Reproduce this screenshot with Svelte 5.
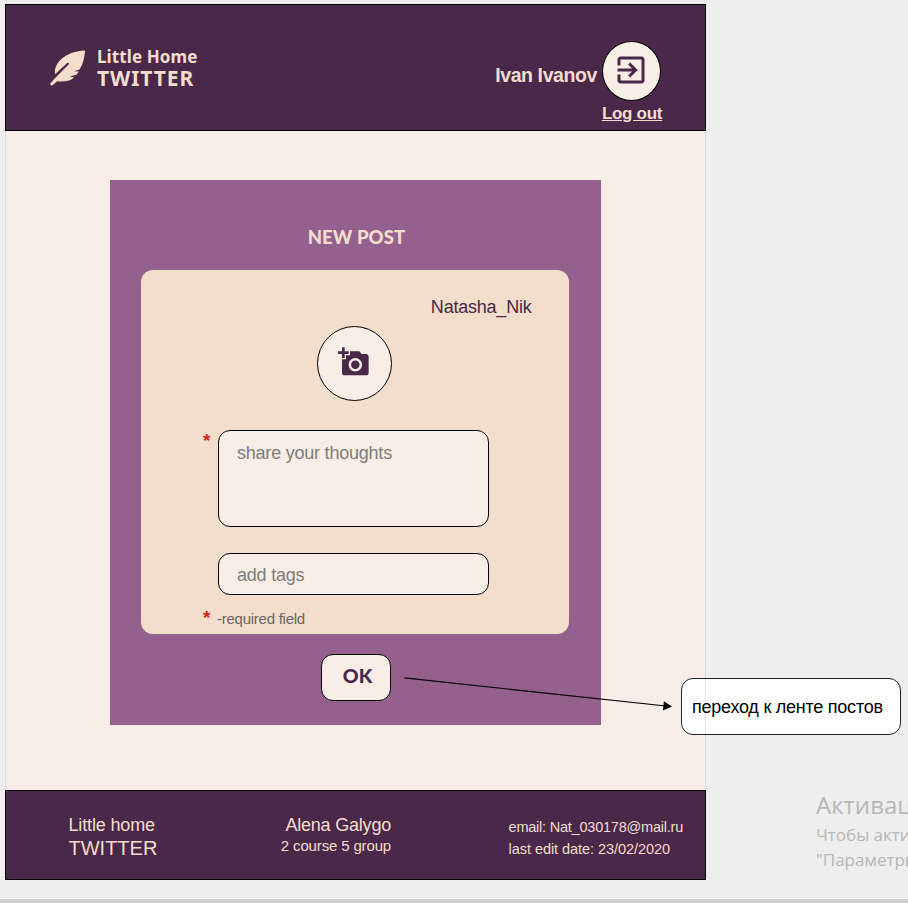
<script>
  let thoughts = $state('');
  let tags = $state('');
</script>

<div class="stage">
  <div class="page">
    <header>
      <div class="brand">
        <svg class="feather" width="36" height="36" viewBox="0 0 36 36" aria-hidden="true">
          <path d="M35 .5C34.800 5 33.500 14 29.500 19.600L24 21.200L28.800 21.400L26.800 24.600L20 26.600L24 27.400C20 31.300 13 31.800 7.200 31.200L2.600 35.200Q.4 36 .1 33.700L4.700 28.500L18.800 14.300Q19.300 12.500 17.200 12.900L5 24.200C3.500 12.500 16 1.200 35 .5Z" />
        </svg>
        <div class="name"><span class="little">Little Home</span><strong>TWITTER</strong></div>
      </div>
      <div class="account">
        <span class="user">Ivan Ivanov</span>
        <div class="exit">
          <button class="round" aria-label="Log out">
            <svg width="36" height="36" viewBox="0 0 24 24"><path d="M10.090 15.590L11.500 17l5-5-5-5-1.410 1.410L12.670 11H3v2h9.670l-2.580 2.590zM19 3H5c-1.110 0-2 .9-2 2v4h2V5h14v14H5v-4H3v4c0 1.100.89 2 2 2h14c1.100 0 2-.9 2-2V5c0-1.100-.9-2-2-2z" /></svg>
          </button>
          <a href="#logout">Log out</a>
        </div>
      </div>
    </header>

    <main>
      <section class="panel">
        <h1>NEW POST</h1>
        <div class="card">
          <div class="author">Natasha_Nik</div>
          <button class="photo" aria-label="Add photo">
            <svg width="32" height="32" viewBox="0 0 24 24"><path d="M3 4V1h2v3h3v2H5v3H3V6H0V4h3zm3 6V7h3V4h7l1.830 2H21c1.100 0 2 .9 2 2v12c0 1.100-.9 2-2 2H5c-1.100 0-2-.9-2-2V10h3zm7 9c2.760 0 5-2.240 5-5s-2.240-5-5-5-5 2.240-5 5 2.240 5 5 5zm-3.200-5c0 1.770 1.430 3.200 3.200 3.200s3.200-1.430 3.200-3.200-1.430-3.200-3.200-3.200-3.200 1.430-3.200 3.200z" /></svg>
          </button>
          <div class="row thoughts">
            <span class="star">*</span>
            <textarea placeholder="share your thoughts" bind:value={thoughts}></textarea>
          </div>
          <div class="row tags">
            <span class="star"></span>
            <input placeholder="add tags" bind:value={tags} />
          </div>
          <div class="row note"><span class="star">*</span><span>-required field</span></div>
        </div>
        <button class="ok">OK</button>
      </section>
    </main>

    <footer>
      <div class="f1"><span>Little home</span><span class="big">TWITTER</span></div>
      <div class="f2"><span>Alena Galygo</span><small>2 course 5 group</small></div>
      <div class="f3"><span class="mail">email: Nat_030178@mail.ru</span><span>last edit date: 23/02/2020</span></div>
    </footer>
  </div>
  <div class="edge"></div>

  <svg class="arrow" width="280" height="50" viewBox="0 0 280 50" aria-hidden="true">
    <path d="M4.500 7.900L266 36" stroke="#000" stroke-width="1.200" />
    <path d="M272 36.600L262.900 40.400L263.900 31.200Z" />
  </svg>
  <div class="callout"><span>переход к ленте постов</span></div>
  <div class="watermark">
    <div class="w1">Активация Windows</div>
    <div>Чтобы активировать</div>
    <div>"Параметры"</div>
  </div>
</div>

<style>
  :global(body) { margin: 0; }
  .stage { position: relative; width: 908px; height: 903px; overflow: hidden; box-sizing: border-box; padding: 4px 0 0 5px; background: #eee; font-family: "Liberation Sans", Arial, sans-serif; display: flex; flex-direction: column; align-items: flex-start; }
  .stage * { box-sizing: border-box; }
  button { padding: 0; font: inherit; cursor: pointer; }
  .page { width: 701px; display: flex; flex-direction: column; }
  header { height: 127px; background: #49284a; border: 1.500px solid #000; color: #f5ddcc; display: flex; justify-content: space-between; padding: 0 43px 0 44px; }
  .brand { display: flex; gap: 11px; padding-top: 44.500px; }
  .feather { fill: #f5ddcc; flex: none; }
  .name { display: flex; flex-direction: column; white-space: nowrap; }
  .little { font: 700 17px/22px "Noto Sans", sans-serif; letter-spacing: .1px; margin-top: -4px; }
  .name strong { font: 700 21px/23px "Noto Sans", sans-serif; letter-spacing: .9px; margin-top: -1px; }
  .account { display: flex; align-items: flex-start; padding-top: 36px; }
  .user { font-size: 19.500px; line-height: 24px; font-weight: 700; margin: 22px 5px 0 0; white-space: nowrap; letter-spacing: -.4px; }
  .exit { width: 60px; display: flex; flex-direction: column; align-items: center; }
  .round { width: 59px; height: 60px; margin-right: 2px; border-radius: 50%; border: 1.500px solid #000; background: #f8ede7; display: flex; align-items: center; justify-content: center; padding: 0 1px 2px 0; }
  .round svg, .photo svg { fill: #49284a; flex: none; }
  .exit a { font-size: 17px; line-height: 20px; font-weight: 700; color: #f5ddcc; white-space: nowrap; margin-top: 3px; letter-spacing: -.3px; }
  main { height: 659px; background: #f8ede7; border: solid #ddd; border-width: 0 1px; padding: 49px 0 0 104px; }
  .panel { width: 491px; height: 545px; background: #94618e; display: flex; flex-direction: column; align-items: center; }
  h1 { margin: 45px 0 0 2px; font: 900 18.500px/24px Lato, sans-serif; color: #f5ddcc; height: 45px; letter-spacing: .1px; }
  .card { width: 428px; height: 364px; border-radius: 12px; background: #f4decb; display: flex; flex-direction: column; margin-right: 1px; padding-left: 62px; }
  .author { color: #49284a; font-size: 18px; line-height: 22px; margin: 26px 37.500px 0 0; align-self: flex-end; letter-spacing: -.22px; }
  .photo { width: 75px; height: 75px; margin: 8px 0 0 114px; border: 1.500px solid #000; border-radius: 50%; background: #f8ede7; display: flex; align-items: center; justify-content: center; padding: 0 2px 3px 0; }
  .row { display: flex; }
  .star { width: 15px; color: #d9261c; font-weight: 700; font-size: 19px; line-height: 22px; }
  .thoughts { margin-top: 29px; }
  textarea, input { width: 271px; border: 1.500px solid #000; border-radius: 12px; background: #f8ede7; font: 18px/22px "Liberation Sans", Arial, sans-serif; letter-spacing: -.22px; padding: 11px 18px; outline: 0; }
  textarea::placeholder, input::placeholder { color: #7f7d78; opacity: 1; }
  textarea { height: 97px; resize: none; }
  .tags { margin-top: 26px; }
  input { height: 42px; padding: 2px 18px 0; }
  .note { margin-top: 12px; font-size: 15px; line-height: 23px; color: #666; letter-spacing: -.25px; }
  .note .star { line-height: 21px; width: 14px; }
  .ok { width: 70px; height: 47px; margin: 20px 0 0; padding: 0 0 4px 4px; border: 1.500px solid #000; border-radius: 12px; background: #f8ede7; color: #49284a; font: 900 19.500px Lato, sans-serif; }
  footer { height: 90px; background: #49284a; border: 1.500px solid #000; color: #f5ddcc; display: flex; padding: 0 22px 0 62.500px; font-size: 18px; white-space: nowrap; }
  footer div { display: flex; flex-direction: column; }
  .f1 { padding-top: 22px; line-height: 24px; width: 200px; letter-spacing: -.15px; }
  .big { font-size: 20px; line-height: 22px; letter-spacing: 0; }
  .f2 { padding-top: 22px; align-items: flex-end; line-height: 24px; width: 123px; letter-spacing: -.2px; }
  .f2 small { font-size: 15px; line-height: 18px; letter-spacing: -.15px; }
  .f3 { padding: 25px 0 0 117.500px; font-size: 14.500px; line-height: 22px; letter-spacing: -.05px; }
  .mail { letter-spacing: -.22px; }
  .edge { position: absolute; left: 0; bottom: 0; width: 100%; height: 5px; background: #ccc; border-top: 1px solid #fff; }
  .arrow { position: absolute; left: 400px; top: 670px; }
  .callout { position: absolute; left: 681px; top: 678px; width: 220px; height: 57px; border: 1.500px solid #222; border-radius: 12px; background: linear-gradient(90deg, #fff 23px, #e7e7e7 23px, #e7e7e7 24px, #fff 24px); display: flex; align-items: center; padding: 1px 0 0 10px; font-size: 18px; letter-spacing: -.24px; white-space: nowrap; }
  .watermark { position: absolute; left: 816px; top: 788px; width: 92px; overflow: hidden; white-space: nowrap; color: #b7b7b7; font: 17px/25px "Open Sans", sans-serif; }
  .w1 { font-size: 24px; line-height: 34px; }
</style>
